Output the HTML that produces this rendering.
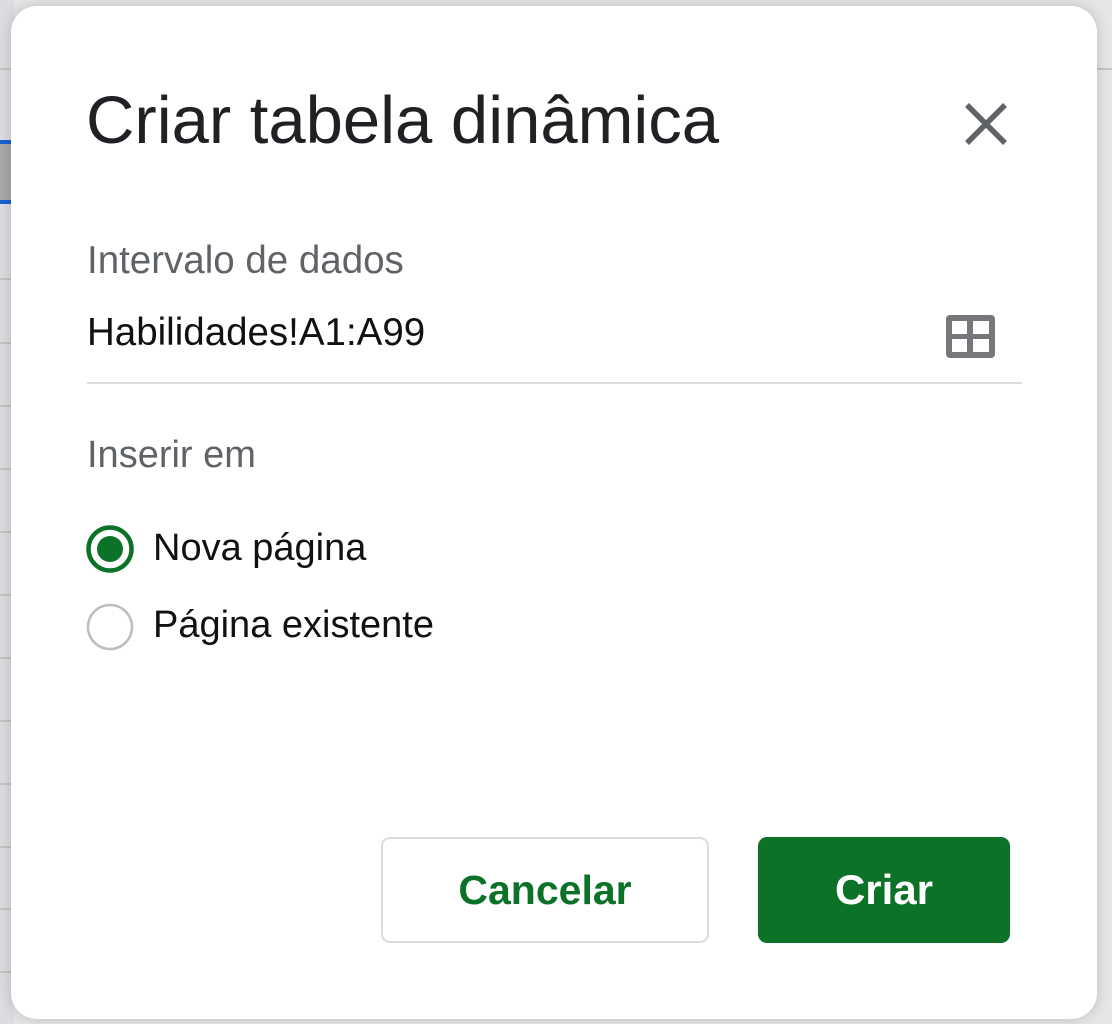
<!DOCTYPE html>
<html><head><meta charset="utf-8"><style>
html,body{margin:0;padding:0}
body{width:1112px;height:1024px;position:relative;overflow:hidden;background:#e6e6e6;font-family:"Liberation Sans",Arial,sans-serif}
.strip{position:absolute;left:0;top:0;width:14px;height:1024px;background:#dcdde0}
.hl{position:absolute;height:2px;background:#c4c4c4}
.dlg{position:absolute;left:11px;top:6px;width:1086px;height:1013px;background:#fff;border-radius:26px;box-shadow:0 0 14px rgba(0,0,0,.18)}
.t{position:absolute;white-space:nowrap;line-height:1}
</style></head><body>
<div class="strip"></div>
<div style="position:absolute;left:0;top:140px;width:14px;height:64px;background:#a9a9a9;border-top:4px solid #1a5fd6;border-bottom:4px solid #1a5fd6;box-sizing:border-box"></div>
<div class="hl" style="left:0;top:68px;width:14px"></div>
<div class="hl" style="left:0;top:278px;width:14px"></div>
<div class="hl" style="left:0;top:342px;width:14px"></div>
<div class="hl" style="left:0;top:405px;width:14px"></div>
<div class="hl" style="left:0;top:468px;width:14px"></div>
<div class="hl" style="left:0;top:531px;width:14px"></div>
<div class="hl" style="left:0;top:594px;width:14px"></div>
<div class="hl" style="left:0;top:657px;width:14px"></div>
<div class="hl" style="left:0;top:720px;width:14px"></div>
<div class="hl" style="left:0;top:783px;width:14px"></div>
<div class="hl" style="left:0;top:846px;width:14px"></div>
<div class="hl" style="left:0;top:908px;width:14px"></div>
<div class="hl" style="left:0;top:971px;width:14px"></div>
<div class="hl" style="left:1095px;top:68px;width:17px"></div>
<div class="dlg"></div>
<div class="t" style="left:86px;top:87px;font-size:67px;color:#202124">Criar tabela dinâmica</div>
<svg style="position:absolute;left:962px;top:100px" width="48" height="48" viewBox="0 0 48 48"><path d="M5 5L43 43M43 5L5 43" stroke="#5f6368" stroke-width="5.5"/></svg>
<div class="t" style="left:87px;top:242px;font-size:38.5px;color:#5f6368">Intervalo de dados</div>
<div class="t" style="left:87px;top:314px;font-size:38.5px;color:#111">Habilidades!A1:A99</div>
<svg style="position:absolute;left:946px;top:315px" width="49" height="43" viewBox="0 0 49 43"><rect x="0" y="0" width="49" height="43" rx="4" fill="#75777b"/><rect x="6" y="6" width="15" height="13" fill="#fff"/><rect x="27" y="6" width="16" height="13" fill="#fff"/><rect x="6" y="24" width="15" height="13" fill="#fff"/><rect x="27" y="24" width="16" height="13" fill="#fff"/></svg>
<div style="position:absolute;left:87px;top:382px;width:935px;height:2px;background:#dadce0"></div>
<div class="t" style="left:87px;top:436px;font-size:38px;color:#5f6368">Inserir em</div>
<svg style="position:absolute;left:84px;top:523px" width="52" height="130" viewBox="0 0 52 130"><circle cx="26" cy="26" r="21.5" fill="none" stroke="#0b7228" stroke-width="4.5"/><circle cx="26" cy="26" r="13" fill="#0b7228"/><circle cx="26" cy="104" r="22" fill="none" stroke="#bdbdbd" stroke-width="2.5"/></svg>
<div class="t" style="left:153px;top:529px;font-size:38px;color:#111">Nova página</div>
<div class="t" style="left:153px;top:606px;font-size:38px;color:#111">Página existente</div>
<div style="position:absolute;left:381px;top:837px;width:328px;height:106px;box-sizing:border-box;border:2px solid #dadce0;border-radius:9px;color:#0b7228;font-weight:bold;font-size:41px;display:flex;align-items:center;justify-content:center">Cancelar</div>
<div style="position:absolute;left:758px;top:837px;width:252px;height:106px;background:#0b7228;border-radius:9px;color:#fff;font-weight:bold;font-size:42px;display:flex;align-items:center;justify-content:center">Criar</div>
</body></html>
